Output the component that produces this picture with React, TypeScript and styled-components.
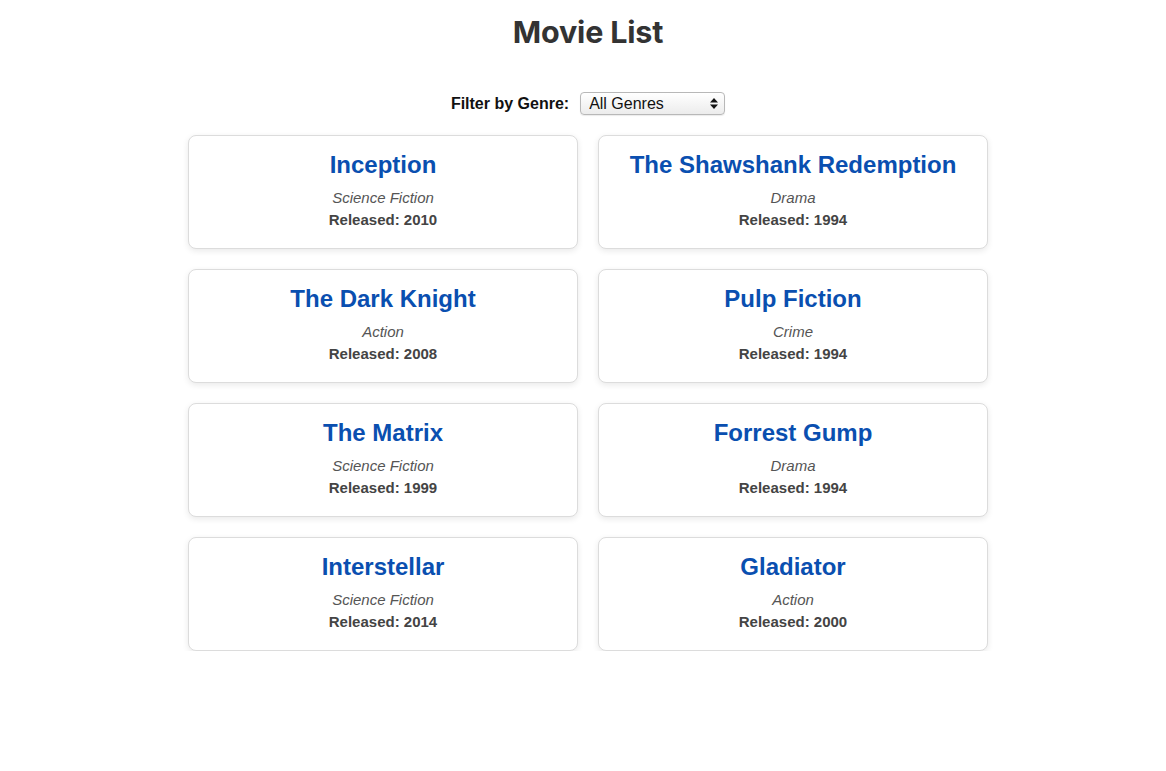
import React, { useState } from "react";
import styled, { createGlobalStyle } from "styled-components";

const GlobalStyle = createGlobalStyle`
  html, body { margin: 0; padding: 0; background: #ffffff; }
  body { font-family: "Liberation Sans", Arial, Helvetica, sans-serif; }
`;

const Page = styled.div`
  padding: 0 0 0 10px;
  display: flex;
  flex-direction: column;
  align-items: center;
`;

const Title = styled.h1`
  margin: 14px 0 0;
  font-family: Inter, "Liberation Sans", sans-serif;
  font-size: 30.5px;
  line-height: 36px;
  font-weight: 700;
  color: #333333;
  letter-spacing: -0.2px;
`;

const FilterRow = styled.div`
  margin-top: 42px;
  display: flex;
  align-items: center;
  gap: 11px;
`;

const Label = styled.label`
  font-size: 16px;
  font-weight: 700;
  color: #111;
`;

const SelectWrap = styled.div`
  position: relative;
  width: 145px;
  height: 23px;
`;

const Select = styled.select`
  appearance: none;
  -webkit-appearance: none;
  width: 100%;
  height: 100%;
  box-sizing: border-box;
  border: 1px solid #b8b8b8;
  border-radius: 4px;
  background: linear-gradient(#ffffff, #ececec);
  box-shadow: 0 1px 1px rgba(0, 0, 0, 0.08);
  font-family: "Liberation Sans", Arial, sans-serif;
  font-size: 16px;
  color: #111;
  padding: 0 24px 0 8px;
  outline: none;
`;

const Arrows = styled.svg`
  position: absolute;
  right: 7px;
  top: 6px;
  pointer-events: none;
`;

const Grid = styled.div`
  margin-top: 20px;
  display: grid;
  grid-template-columns: repeat(2, 390px);
  gap: 20px;
`;

const Card = styled.div`
  box-sizing: border-box;
  height: 114px;
  border: 1px solid #dcdcdc;
  border-radius: 8px;
  box-shadow: 0 2px 6px rgba(0, 0, 0, 0.09);
  background: #fff;
  padding: 15px 10px 0;
  text-align: center;
`;

const MovieTitle = styled.h2`
  margin: 0;
  font-size: 24px;
  line-height: 28px;
  font-weight: 700;
  color: #0a4fb0;
`;

const Genre = styled.p`
  margin: 10px 0 0;
  font-size: 15px;
  line-height: 18px;
  font-style: italic;
  color: #555;
`;

const Year = styled.p`
  margin: 4px 0 0;
  font-size: 15px;
  line-height: 18px;
  font-weight: 700;
  color: #444;
`;

const movies = [
  { title: "Inception", genre: "Science Fiction", year: 2010 },
  { title: "The Shawshank Redemption", genre: "Drama", year: 1994 },
  { title: "The Dark Knight", genre: "Action", year: 2008 },
  { title: "Pulp Fiction", genre: "Crime", year: 1994 },
  { title: "The Matrix", genre: "Science Fiction", year: 1999 },
  { title: "Forrest Gump", genre: "Drama", year: 1994 },
  { title: "Interstellar", genre: "Science Fiction", year: 2014 },
  { title: "Gladiator", genre: "Action", year: 2000 },
];

export default function App() {
  const [genre, setGenre] = useState("All");
  const genres = ["All", ...Array.from(new Set(movies.map((m) => m.genre)))];
  const shown = genre === "All" ? movies : movies.filter((m) => m.genre === genre);
  return (
    <>
      <GlobalStyle />
      <Page>
        <Title>Movie List</Title>
        <FilterRow>
          <Label htmlFor="genre">Filter by Genre:</Label>
          <SelectWrap>
            <Select id="genre" value={genre} onChange={(e) => setGenre(e.target.value)}>
              {genres.map((g) => (
                <option key={g} value={g}>
                  {g === "All" ? "All Genres" : g}
                </option>
              ))}
            </Select>
            <Arrows width="8" height="11" viewBox="0 0 8 11">
              <path d="M4 0 L8 4.5 H0 Z" fill="#111" />
              <path d="M4 11 L8 6.5 H0 Z" fill="#111" />
            </Arrows>
          </SelectWrap>
        </FilterRow>
        <Grid>
          {shown.map((m) => (
            <Card key={m.title}>
              <MovieTitle>{m.title}</MovieTitle>
              <Genre>{m.genre}</Genre>
              <Year>Released: {m.year}</Year>
            </Card>
          ))}
        </Grid>
      </Page>
    </>
  );
}
